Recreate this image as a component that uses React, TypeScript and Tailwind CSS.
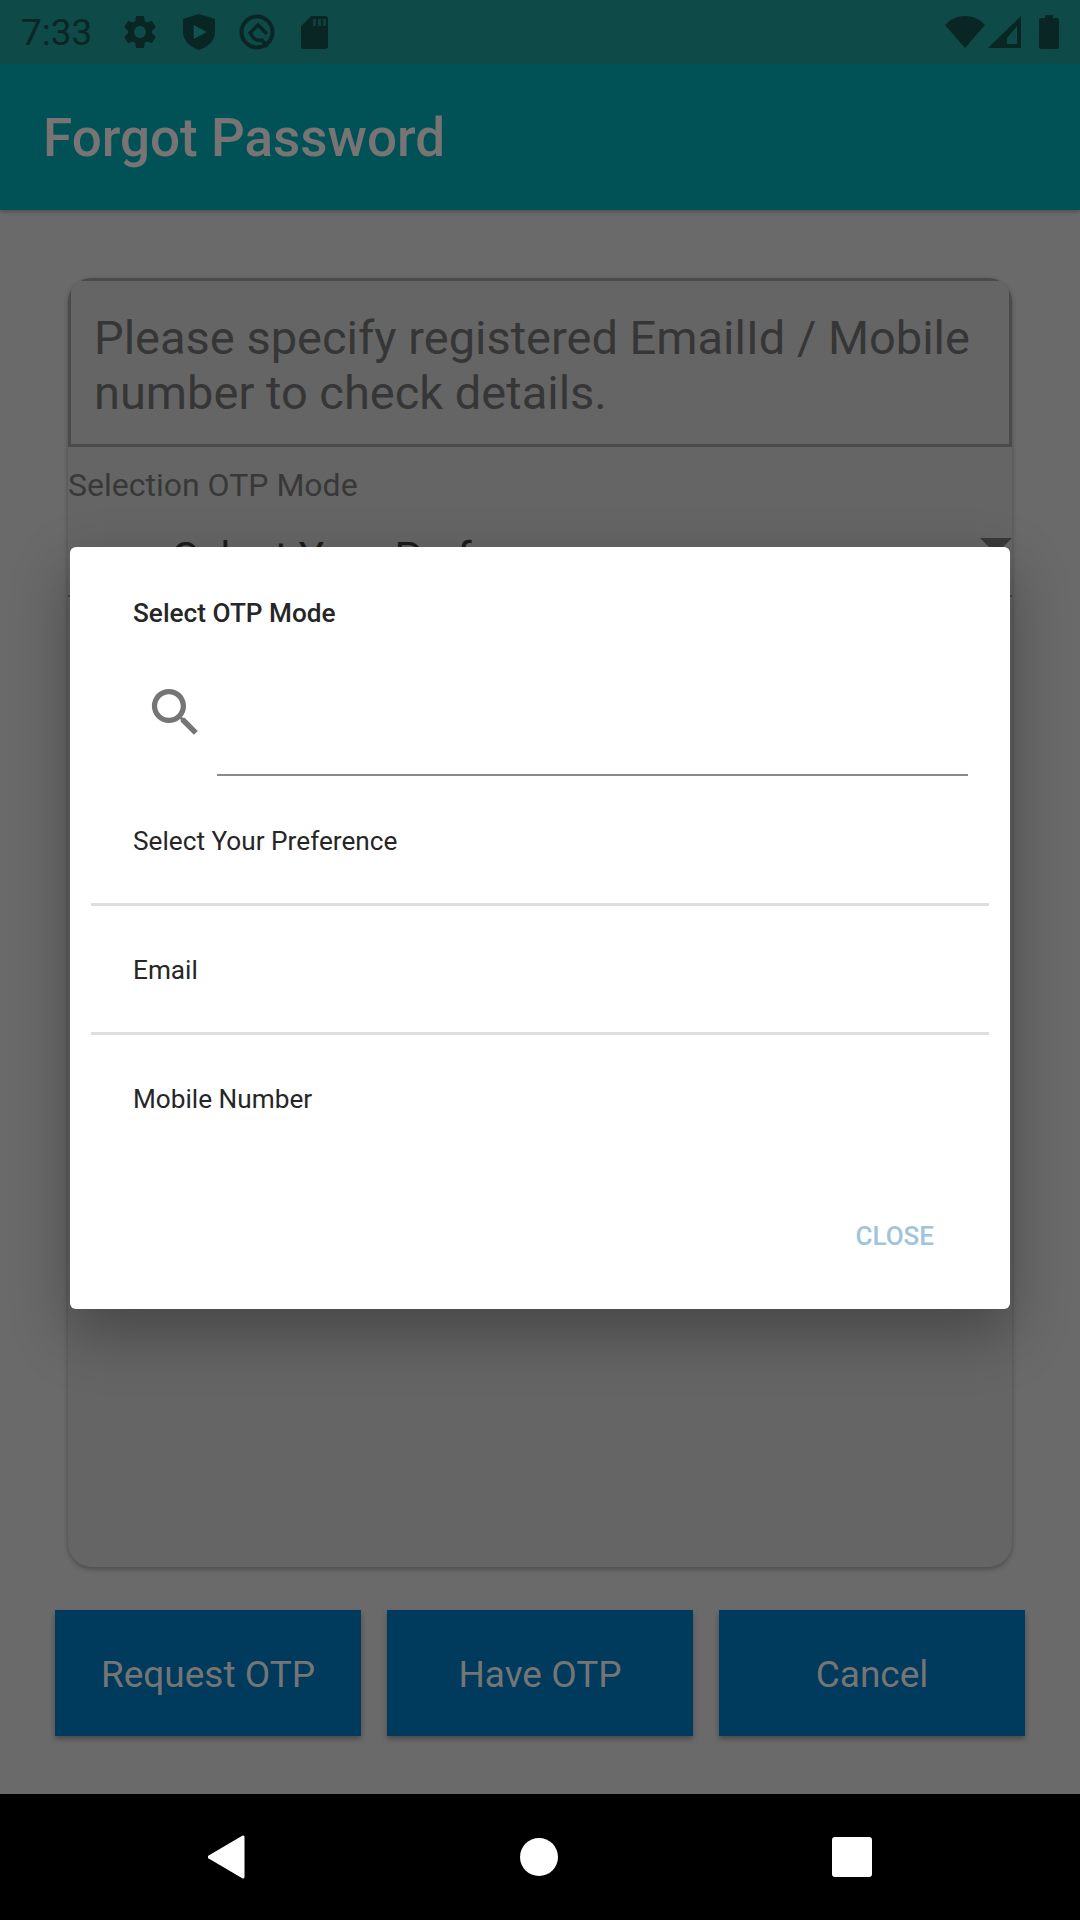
import React from "react";
import { MdSettings, MdSearch } from "react-icons/md";

const font = { fontFamily: "Roboto, sans-serif" };

const options = ["Select Your Preference", "Email", "Mobile Number"];
const actions = ["Request OTP", "Have OTP", "Cancel"];

const StatusBar = () => (
  <div className="h-16 bg-[#0e4a47] flex items-center text-[#0a2624] shrink-0 relative">
    <span className="ml-[21px] w-[104px] text-[37px] leading-none font-normal">7:33</span>
    <MdSettings className="w-10 h-10 -ml-[5px]" />
    <svg className="w-[32px] h-[36px] ml-[23px]" viewBox="0 0 30 36" preserveAspectRatio="none">
      <path d="M15 0 L30 5 V18 C30 27 23 33 15 36 C7 33 0 27 0 18 V5 Z" fill="currentColor" />
      <path d="M10 11 L22 18 L10 25 Z" fill="#0e5552" />
    </svg>
    <svg className="w-[38px] h-[36px] ml-[23px]" viewBox="0 0 38 36" fill="none" stroke="currentColor">
      <circle cx="19" cy="18" r="15.5" strokeWidth="4" />
      <path d="M11 20 L20 11 L29 20 M13 20 A9 9 0 0 0 24 26 L29 33" strokeWidth="3.5" />
    </svg>
    <svg className="w-[27px] h-[33px] ml-[25px]" viewBox="0 0 27 33">
      <path d="M10 0 H24 A3 3 0 0 1 27 3 V30 A3 3 0 0 1 24 33 H3 A3 3 0 0 1 0 30 V10 Z" fill="currentColor" />
      <path d="M12 3 h3 v7 h-3 Z M17 3 h3 v7 h-3 Z M22 3 h3 v7 h-3 Z" fill="#0e4a47" opacity="0.7" />
    </svg>
    <div className="ml-auto mr-[21px] flex items-center">
      <svg className="w-10 h-8" viewBox="0 0 40 32">
        <path d="M0 9 C11 -3 29 -3 40 9 L20 32 Z" fill="currentColor" />
      </svg>
      <svg className="w-[33px] h-8 ml-[3px]" viewBox="0 0 33 32">
        <path d="M33 0 V32 H0 Z M29 10 L14 28 H29 Z" fill="currentColor" fillRule="evenodd" />
        <path d="M14 21 L19 16 V28 H14 Z" fill="currentColor" />
      </svg>
      <svg className="w-5 h-[34px] ml-[18px]" viewBox="0 0 20 34">
        <path d="M6 0 H14 V3 H18 A2 2 0 0 1 20 5 V32 A2 2 0 0 1 18 34 H2 A2 2 0 0 1 0 32 V5 A2 2 0 0 1 2 3 H6 Z" fill="currentColor" />
      </svg>
    </div>
  </div>
);

const NavBar = () => (
  <div className="h-[126px] bg-black shrink-0 relative flex items-center justify-center">
    <div className="w-[664px] flex items-center justify-between">
      <svg className="w-[38px] h-[44px]" viewBox="1 0 38 44">
        <path d="M36 2 V42 L2 22 Z" fill="white" stroke="white" strokeWidth="3" strokeLinejoin="round" />
      </svg>
      <div className="w-[38px] h-[38px] rounded-full bg-white" />
      <div className="w-[40px] h-[40px] rounded-[3px] bg-white" />
    </div>
  </div>
);

const App = () => {
  return (
    <div className="w-[1080px] h-[1920px] relative flex flex-col bg-[#6a6a6a] overflow-hidden" style={font}>
      <StatusBar />
      <div className="h-[146px] bg-[#005257] shrink-0 flex items-center pl-[43px] pt-[2px] shadow-[0_2px_4px_rgba(0,0,0,0.25)]">
        <span className="text-[53px] font-medium text-[#787474] leading-none">Forgot Password</span>
      </div>

      <div className="flex-1 flex flex-col">
        {/* card behind the dialog */}
        <div className="ml-[68px] mt-[68px] w-[944px] h-[1289px] bg-[#656565] rounded-[24px] shadow-[0_2px_5px_rgba(0,0,0,0.3)] overflow-hidden">
          <div className="h-[169px] border-[3px] border-[#4a4a4a] rounded-t-[10px] pl-[23px] pr-[10px] pt-[29px]">
            <p className="text-[47px] leading-[55px] text-[#363636]">
              Please specify registered EmailId / Mobile number to check details.
            </p>
          </div>
          <div className="text-[32px] leading-none text-[#383838] mt-[22px]">Selection OTP Mode</div>
          <div className="relative h-[77px] mt-[19px] border-b-2 border-[#444444] pl-[105px] pt-[17px]">
            <span className="block text-[42px] leading-none text-[#1c1c1c]">Select Your Preference</span>
            <div className="absolute right-0 top-[18px] w-0 h-0 border-l-[16px] border-r-[16px] border-t-[16px] border-l-transparent border-r-transparent border-t-[#393939]" />
          </div>
        </div>

        <div className="mt-[43px] px-[55px] flex gap-[26px]">
          {actions.map((a) => (
            <div
              key={a}
              className="w-[306px] h-[126px] pt-[4px] bg-[#003a5c] flex items-center justify-center text-[37px] text-[#757575] shadow-[0_3px_5px_rgba(0,0,0,0.3)]"
            >
              {a}
            </div>
          ))}
        </div>
      </div>

      <NavBar />

      {/* dialog */}
      <div className="absolute left-[70px] top-[547px] w-[940px] h-[762px] bg-white rounded-[6px] shadow-[0_24px_60px_rgba(0,0,0,0.3)] flex flex-col">
        <div className="pl-[63px] pt-[52px] text-[26.2px] leading-[28px] font-medium text-[#262626]">Select OTP Mode</div>
        <div className="flex items-start h-[148px] pt-[54px]">
          <MdSearch className="w-[63px] h-[63px] ml-[74px] text-[#757575] shrink-0" />
          <div className="ml-[10px] mr-[42px] flex-1 h-[94px] mt-[1px] border-b-2 border-[#8a8a8a]" />
        </div>
        <div className="mt-[1px]">
          {options.map((o, i) => (
            <div key={o} className={i < 2 ? "mx-[21px] h-[129px] mt-[1px] -mb-[1px] border-b-[3px] border-[#dedede] pl-[42px] pt-[49px]" : "mx-[21px] h-[129px] mt-[1px] -mb-[1px] pl-[42px] pt-[49px]"}>
              <span className="block text-[26.2px] leading-[30px] text-[#262626]">{o}</span>
            </div>
          ))}
        </div>
        <div className="mt-[59px] pr-[76px] flex justify-end">
          <span className="text-[26px] leading-[28px] font-medium text-[#9fc4dc]">CLOSE</span>
        </div>
      </div>
    </div>
  );
};

export default App;
